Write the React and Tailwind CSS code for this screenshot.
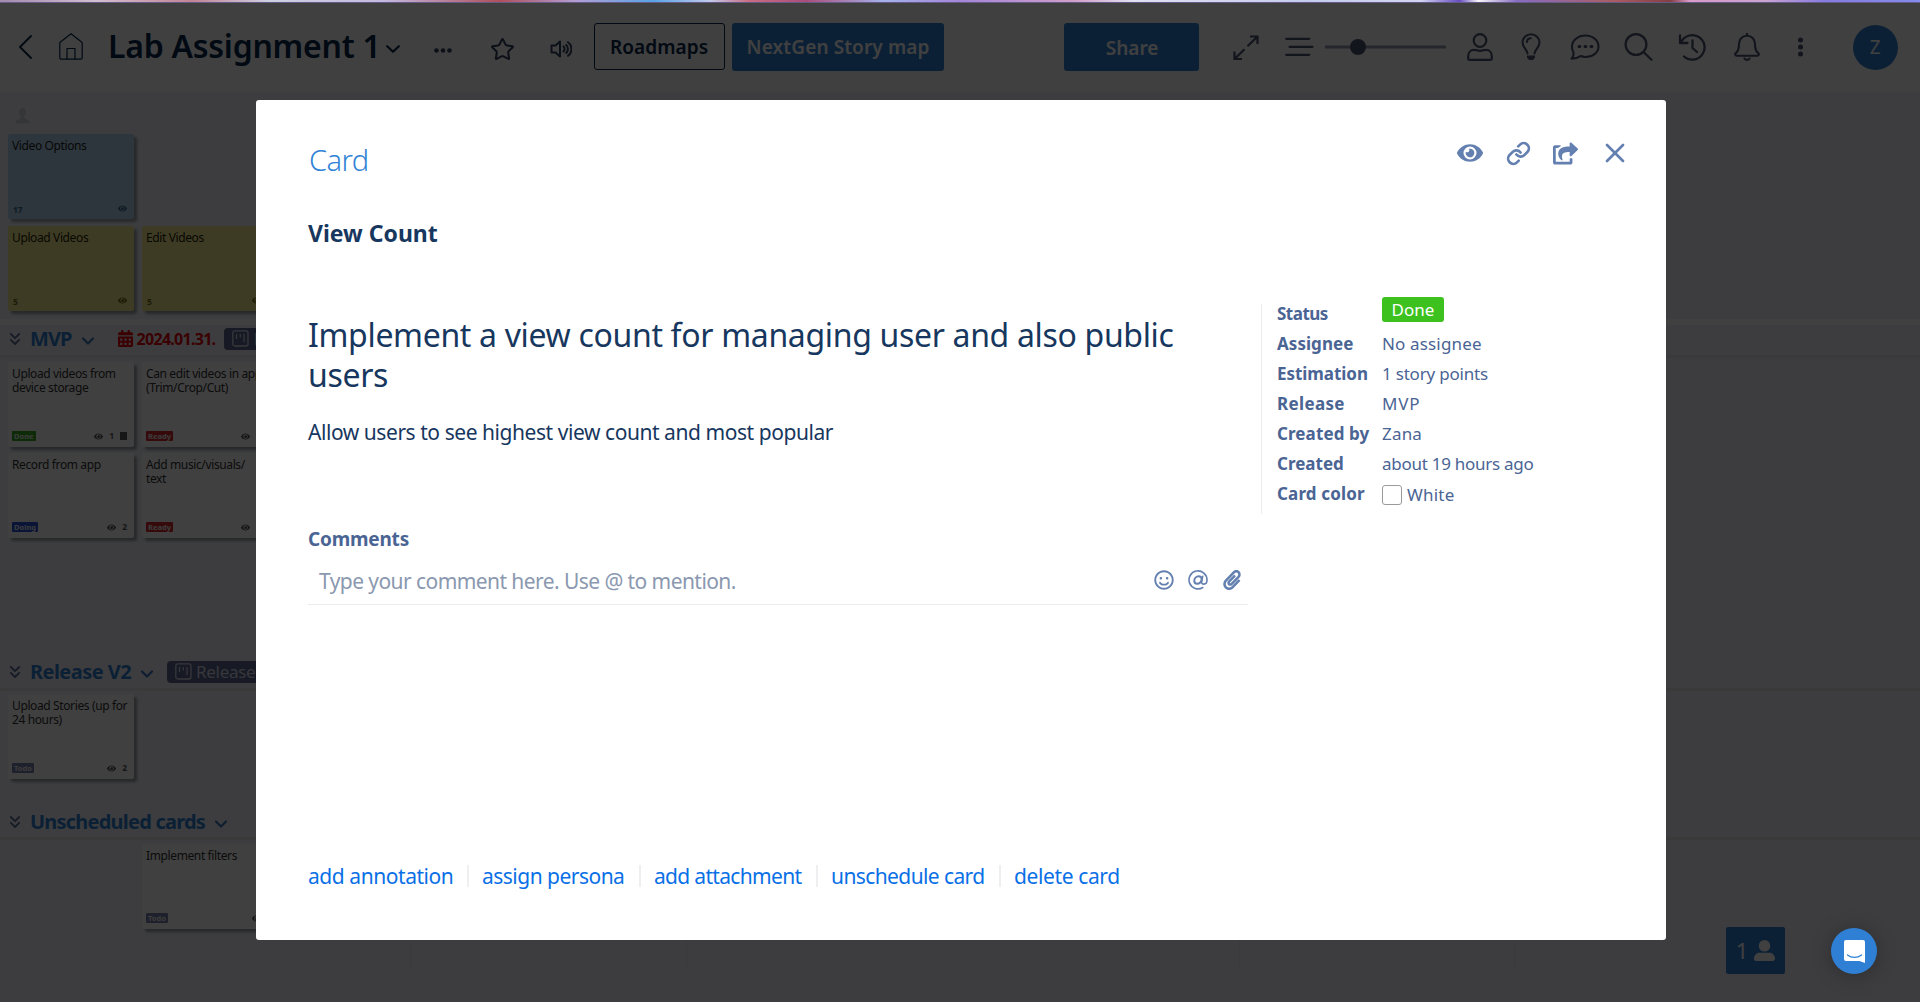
import React from "react";
import { FaEye, FaRegSmile, FaPaperclip, FaShareSquare, FaCalendarAlt } from "react-icons/fa";
import { Link, X, ChevronDown, ChevronsDown, Star } from "lucide-react";

const IconBox = ({ className, viewBox, children, sw = 2 }) => (
  <svg
    className={className}
    viewBox={viewBox}
    fill="none"
    stroke="currentColor"
    strokeWidth={sw}
    strokeLinecap="round"
    strokeLinejoin="round"
  >
    {children}
  </svg>
);

const badgeColors = {
  Done: "bg-[#35ab1c]",
  Doing: "bg-[#2450d8]",
  Ready: "bg-[#d8292f]",
  Todo: "bg-[#7a82ad]",
};

function Card({ title, tone = "bg-white text-[#333333]", meta = "text-[#5a5a5a]", badge, number, count, square }) {
  return (
    <div className={`flex h-[85px] w-[126px] shrink-0 flex-col justify-between rounded-[2px] pt-[5px] pr-[7px] pb-[6px] pl-1 shadow-[3px_3px_3px_rgba(0,0,0,0.35)] ${tone}`}>
      <div className="w-[124px] text-[12px] leading-[14px] tracking-[-0.38px] whitespace-pre">{title}</div>
      <div className={`flex h-[10px] items-center justify-between text-[8.500px] leading-[10px] font-bold ${meta}`}>
        {badge ? (
          <span className={`rounded-[1px] px-[2px] text-[7.500px] leading-[10px] font-bold text-[#f0f0f0] ${badgeColors[badge]}`}>{badge}</span>
        ) : (
          <span className="pt-1 pl-px">{number}</span>
        )}
        <span className="flex items-center gap-[6px]">
          <FaEye className="size-[9px]" />
          {count && <span>{count}</span>}
          {square && <span className="h-2 w-[7px] bg-current" />}
        </span>
      </div>
    </div>
  );
}

function LaneTag({ label }) {
  return (
    <span className="flex h-[22px] w-[120px] shrink-0 items-center gap-1 rounded-[4px] bg-[#5c658f] pl-2 text-[17px] leading-[22px] tracking-[-0.3px] text-[#d8dbe8]">
      <svg className="size-[17px] shrink-0" viewBox="0 0 17 17" fill="none" stroke="currentColor">
        <rect x="0.8" y="0.8" width="15.2" height="15.2" rx="2" strokeWidth="1.3" />
        <path d="M4.5 4v5M8.3 4v3.5M12 4v8" strokeWidth="1.2" />
      </svg>
      {label}
    </span>
  );
}

function LaneHeader({ title, tracking, date, tag, tagGap = "", pad = "pb-[3px]" }) {
  return (
    <div className={`flex h-[33px] items-center border-b-[3px] border-[#e5e6ec] pl-[5px] ${pad}`}>
      <ChevronsDown className="size-5 text-[#5c6c98]" strokeWidth={2.2} />
      <span className={`ml-[5px] text-[20px] leading-[26px] font-bold whitespace-nowrap text-[#2f80d4] ${tracking}`}>{title}</span>
      <ChevronDown className="mt-1 ml-[6px] size-5 text-[#3a74bc]" strokeWidth={2.6} />
      {date && (
        <span className="ml-5 flex items-center gap-1 text-[#e8000b]">
          <FaCalendarAlt className="h-[17px] w-[15px]" />
          <span className="text-[16px] leading-5 font-bold tracking-[-0.72px]">{date}</span>
        </span>
      )}
      {tag && (
        <span className={tagGap}>
          <LaneTag label={tag} />
        </span>
      )}
    </div>
  );
}

function TopBar() {
  return (
    <header className="flex h-[89px] shrink-0 items-start bg-white text-[#04264c] shadow-[0_2px_10px_rgba(0,0,0,0.15)]">
      <IconBox className="mt-8 ml-[19px] h-6 w-[13px]" viewBox="0 0 13 24" sw={1.8}>
        <path d="M12 1 1 12l11 11" />
      </IconBox>
      <IconBox className="mt-[30px] ml-[27px] h-[27px] w-6" viewBox="0 0 24 27" sw={1.2}>
        <path d="M.8 9.5 12 .8l11.200 8.700V25a1.200 1.200 0 0 1-1.200 1.200H2A1.200 1.200 0 0 1 .8 25ZM8 26V15.500h8V26" />
      </IconBox>
      <h1 className="mt-[22px] ml-[25px] text-[32px] leading-[42px] font-semibold tracking-[-0.25px] whitespace-nowrap">Lab Assignment 1</h1>
      <IconBox className="mt-[42px] ml-[5px] h-[8px] w-[14px]" viewBox="0 0 14 8" sw={2.2}>
        <path d="m1.200 1.200 5.800 5.600 5.800-5.600" />
      </IconBox>
      <svg className="mt-[45px] ml-[34px] h-[5px] w-[18px] text-[#33425f]" viewBox="0 0 18 5" fill="currentColor">
        <circle cx="2.500" cy="2.500" r="2.300" />
        <circle cx="9" cy="2.500" r="2.300" />
        <circle cx="15.500" cy="2.500" r="2.300" />
      </svg>
      <Star className="mt-[34px] ml-[38px] size-[25px] text-[#33425f]" strokeWidth={2} />
      <IconBox className="mt-[37px] ml-[35px] h-[18px] w-[22px] text-[#33425f]" viewBox="0 0 22 18" sw={2}>
        <path d="M1.500 5.500h4L10 1.500v15l-4.500-4h-4ZM13.500 6.500a3.500 3.500 0 0 1 0 5M16.200 5a5.500 5.500 0 0 1 0 8M18 2.200a8.500 8.500 0 0 1 0 13.600" />
      </IconBox>
      <button className="mt-5 ml-[22px] h-[47px] w-[131px] rounded-[3px] border border-[#04264c] pt-px text-[19px] font-semibold tracking-[0.1px]">Roadmaps</button>
      <button className="mt-5 ml-[7px] h-12 w-[212px] rounded-[3px] bg-[#2f80d4] pl-px text-[19px] font-semibold tracking-[0.13px] text-white">NextGen Story map</button>
      <button className="mt-5 ml-[120px] h-12 w-[135px] rounded-[3px] bg-[#2f80d4] pt-[2px] pl-[2px] text-[19px] font-semibold text-white">Share</button>
      <div className="flex grow items-center pt-[30px] text-[#48536e]">
        <IconBox className="ml-[34px] h-[25px] w-[26px]" viewBox="0 0 26 25" sw={2.2}>
          <path d="M17 1.500h7.500V9M24 2l-9.500 9.300M9 24H1.500v-7.500M2 23.500l9.500-9.300" strokeLinecap="butt" strokeLinejoin="miter" />
        </IconBox>
        <IconBox className="ml-[26px] h-5 w-[29px]" viewBox="0 0 29 20" sw={2.200}>
          <path d="M1.200 1.800h23M4.500 9.800h23M1.200 17.800h23" />
        </IconBox>
        <svg className="ml-[11px] h-[18px] w-[121px]" viewBox="0 0 121 18">
          <rect y="7.500" width="121" height="3" fill="#8a97ad" />
          <circle cx="33" cy="9" r="8" fill="currentColor" />
        </svg>
        <IconBox className="ml-[21px] h-7 w-[26px]" viewBox="0 0 26 28" sw={2.200}>
          <ellipse cx="13" cy="7.500" rx="6.300" ry="6.300" />
          <path d="M7 16.800c2.500 0 3 1 6 1s3.500-1 6-1c3.500 0 5.800 2.800 5.800 6.200v2.200c0 1-.7 1.600-1.600 1.600H2.800c-.9 0-1.600-.6-1.600-1.600V23c0-3.400 2.300-6.200 5.800-6.200Z" />
        </IconBox>
        <IconBox className="ml-[28px] h-7 w-[20px]" viewBox="0 0 20 28" sw={2.100}>
          <path d="M6.500 20.500C6 16 1.500 14.500 1.500 9.300a8.500 8 0 0 1 17 0c0 5.200-4.500 6.700-5 11.200M6 9c0-2.200 1.500-3.700 3.800-3.700" />
          <path d="M6 22.500h8v2l-2 2.500H8l-2-2.500Z" fill="currentColor" stroke="none" />
        </IconBox>
        <IconBox className="ml-[29px] h-[26px] w-[30px]" viewBox="0 0 30 26" sw={2.100}>
          <path d="M3.500 18.500A10.500 10.500 0 0 1 2 12.500C2 6.500 8 1.500 15.500 1.500S28.500 6.500 28.500 12.500 23 23 15.500 23a14 14 0 0 1-5-.9C8 23.800 5 24.600 1.500 24.600 3 23 3.800 21 3.500 18.500Z" />
          <path d="M9 12.500h.9M15 12.500h.9M21 12.500h.9" strokeWidth="3" />
        </IconBox>
        <IconBox className="ml-[24px] h-7 w-[29px]" viewBox="0 0 29 28" sw={2.200}>
          <circle cx="12" cy="11.500" r="10.400" />
          <path d="m19.500 19 8 7.700" />
        </IconBox>
        <IconBox className="ml-[25px] h-7 w-[29px]" viewBox="0 0 29 28" sw={2.300}>
          <path d="M2 2.500v7.500h7.500M3 9.500A12.300 12.300 0 1 1 6 23.500M14.500 7.500v7.500l4.500 4" />
        </IconBox>
        <IconBox className="ml-[27px] h-7 w-[26px]" viewBox="0 0 26 28" sw={2.100}>
          <path d="M13 .8v2M13 2.800c-5 0-8 3.600-8 8.200 0 6-1.500 7.500-3.500 9.500-.8.900-.2 2.200 1 2.200h21c1.200 0 1.800-1.300 1-2.200-2-2-3.500-3.500-3.500-9.500 0-4.600-3-8.200-8-8.200ZM10.500 25.500c.5 1.800 4.500 1.800 5 0" />
        </IconBox>
        <svg className="ml-[37px] h-[22px] w-[7px]" viewBox="0 0 7 22" fill="currentColor">
          <circle cx="3.500" cy="4" r="2.500" />
          <circle cx="3.500" cy="11" r="2.500" />
          <circle cx="3.500" cy="18" r="2.500" />
        </svg>
        <span className="-mt-4 -mb-4 ml-[49px] flex size-[45px] shrink-0 items-center justify-center rounded-full bg-[#2f80d4] text-[19px] text-white">Z</span>
      </div>
    </header>
  );
}

function Board() {
  return (
    <main className="flex grow flex-col bg-[#f1f4fa]">
      <section className="h-[227px] pl-2">
        <svg className="mt-4 ml-[7px] h-4 w-[15px] text-[#d4d6da]" viewBox="0 0 15 16" fill="currentColor">
          <path d="M7.500 0C5.300 0 4 1.700 4 4s1 3.600 2 4.500v1.300C4.500 11 .8 11.300.5 15.500h14C14.200 11.300 10.500 11 9 9.800V8.500c1-.9 2-2.200 2-4.500S9.700 0 7.500 0Z" />
        </svg>
        <div className="mt-[10px]">
          <Card title="Video Options" tone="-mb-px bg-[#b4d8f0] text-[#222222]" meta="text-[#336a8a]" number="17" />
        </div>
        <div className="mt-2 flex gap-2">
          <Card title="Upload Videos" tone="bg-[#f5ec93] text-[#222200]" meta="text-[#6f6a10]" number="5" />
          <Card title="Edit Videos" tone="bg-[#f5ec93] text-[#222200]" meta="text-[#6f6a10]" number="5" />
        </div>
      </section>
      <section className="h-[339px] border-t-[6px] border-white">
        <LaneHeader title="MVP" tracking="tracking-[-0.9px]" date="2024.01.31." tag="R" tagGap="ml-[9px]" />
        <div className="mt-1 grid grid-cols-[126px_126px] gap-x-2 gap-y-[6px] pl-2">
          <Card title={"Upload videos from\ndevice storage"} badge="Done" count="1" square />
          <Card title={"Can edit videos in app\n(Trim/Crop/Cut)"} badge="Ready" count="1" />
          <Card title="Record from app" badge="Doing" count="2" />
          <Card title={"Add music/visuals/\ntext"} badge="Ready" count="1" />
        </div>
      </section>
      <section className="h-[149px]">
        <LaneHeader title="Release V2" tracking="tracking-[-0.55px]" tag="Release" tagGap="ml-[10px]" />
        <div className="mt-[3px] pl-2">
          <Card title={"Upload Stories (up for\n24 hours)"} badge="Todo" count="2" />
        </div>
      </section>
      <section>
        <LaneHeader title="Unscheduled cards" tracking="tracking-[-0.78px]" pad="pb-0" />
        <div className="mt-1 pl-[142px]">
          <Card title="Implement filters" badge="Todo" />
        </div>
        <div className="mt-[11px] flex h-[30px] pl-[410px]">
          <span className="w-[276px] border-l border-[#e4e6ea]" />
          <span className="w-[553px] border-l border-[#e4e6ea]" />
          <span className="w-[275px] border-l border-[#e4e6ea]" />
          <span className="border-l border-[#e4e6ea]" />
        </div>
      </section>
    </main>
  );
}

const details = [
  ["Status", "tracking-[-0.5px]", null],
  ["Assignee", "tracking-[0.05px]", "No assignee", "tracking-[0.15px]"],
  ["Estimation", "tracking-[-0.05px]", "1 story points", "tracking-[-0.2px]"],
  ["Release", "tracking-[0.35px]", "MVP", "tracking-[0.8px]"],
  ["Created by", "tracking-[0.1px]", "Zana", "tracking-[0.2px]"],
  ["Created", "tracking-[0px]", "about 19 hours ago", "tracking-[-0.27px]"],
  ["Card color", "tracking-[0.15px]", null],
];

const actions = [
  ["add annotation", "w-[159px] tracking-[-0.44px]"],
  ["assign persona", "w-[157px] tracking-[-0.52px]"],
  ["add attachment", "w-[162px] tracking-[-0.68px]"],
  ["unschedule card", "w-[168px] tracking-[-0.6px]"],
  ["delete card", "w-[120px] tracking-[-0.38px]"],
];

function CardDialog() {
  return (
    <div className="flex h-[840px] w-[1410px] flex-col rounded-[3px] bg-white pl-[52px] text-[#17375e]">
      <div className="flex justify-between pt-10 pr-[35px]">
        <span className="pl-px text-[29px] leading-10 font-light tracking-[-0.6px] text-[#3083d6]">Card</span>
        <div className="-mt-px flex h-7 items-center text-[#6480b0]">
          <FaEye className="size-[26px]" />
          <Link className="ml-[23px] size-[25px]" strokeWidth={2.600} />
          <FaShareSquare className="ml-[22px] size-[25px]" />
          <X className="ml-[21px] size-8" strokeWidth={2} />
        </div>
      </div>
      <h2 className="mt-[37px] text-[23px] leading-8 font-bold tracking-[0px]">View Count</h2>
      <div className="mt-[55px] flex">
        <div className="w-[940px] shrink-0 pt-[11px]">
          <p className="text-[32px] leading-10 tracking-[-0.33px]">
            Implement a view count for managing user and also public
            <br />
            users
          </p>
          <p className="mt-[23px] text-[21px] leading-7 tracking-[-0.445px]">Allow users to see highest view count and most popular</p>
          <h3 className="mt-[81px] text-[19px] leading-6 font-bold tracking-[-0.2px] text-[#4a6494]">Comments</h3>
          <div className="mt-[7px] flex h-[47px] items-center border-b border-[#ececee] pt-[2px] pl-[11px]">
            <span className="grow text-[21px] tracking-[-0.57px] text-[#8a98b0]">Type your comment here. Use @ to mention.</span>
            <span className="-mt-1 flex items-center gap-[14px] pr-[6px] text-[#6480b0]">
              <FaRegSmile className="size-5" />
              <IconBox className="size-5" viewBox="0 0 20 20" sw={1.600}>
                <path d="M14.800 17.500A9 9 0 1 1 19 10c0 2.600-1.400 4.100-3.200 4.100-1.600 0-2.400-.9-2.100-2.600l1-5.300" />
                <path d="M13.700 9.200c-.1-1.700-1.200-2.900-3-2.900-2.500 0-4.400 2-4.400 4.500 0 1.900 1.100 3 2.700 3 2.600 0 4.400-1.900 4.700-4.600Z" strokeWidth="2" />
              </IconBox>
              <FaPaperclip className="size-5" />
            </span>
          </div>
        </div>
        <div className="ml-[13px] h-[210px] border-l border-[#ececee] pl-[15px]">
          <dl className="-mt-[5px] grid auto-rows-[30px] grid-cols-[105px_auto] text-[17px] leading-[30px] whitespace-nowrap text-[#4a6494]">
            {details.map(([label, lt, value, vt]) => (
              <React.Fragment key={label}>
                <dt className={`font-bold ${lt}`}>{label}</dt>
                {label === "Status" && (
                  <dd className="-mt-[2px] h-[25px] w-[62px] rounded-[3px] bg-[#3cc11f] text-center leading-[25px] text-white">Done</dd>
                )}
                {label === "Card color" && (
                  <dd className="flex items-center gap-[5px] pt-[2px] tracking-[0.2px]">
                    <span className="size-5 rounded-[3px] border border-[#9a9a9a]" />
                    White
                  </dd>
                )}
                {value && <dd className={vt}>{value}</dd>}
              </React.Fragment>
            ))}
          </dl>
        </div>
      </div>
      <nav className="mt-auto mb-[52px] flex items-center text-[21px] leading-6 text-[#0a70e6]">
        {actions.map(([label, cls], i) => (
          <React.Fragment key={label}>
            {i > 0 && <span className="mr-[13px] h-[22px] w-[2px] bg-[#efeff1]" />}
            <a className={`whitespace-nowrap ${cls}`}>{label}</a>
          </React.Fragment>
        ))}
      </nav>
    </div>
  );
}

export default function App() {
  return (
    <div className="relative flex h-[1002px] w-full flex-col overflow-hidden font-['Noto_Sans',sans-serif]">
      <div className="h-[3px] shrink-0 border-b border-[#6a5f88] bg-[linear-gradient(90deg,#a78fb5_0%,#d9c5d8_5%,#c9889c_10%,#d5d8ea_14%,#c9c0e8_20%,#b4525f_26%,#b9a4dc_30%,#5aa8ee_34%,#c8d0f2_37%,#d07088_39%,#b05080_42%,#a9b8f4_46%,#a98ae0_50%,#d8a4d0_56%,#e8e8fa_59%,#ccd2f6_68%,#d8dcfa_74%,#6b50c8_76%,#ffffff_77%,#8a70c8_79%,#b06068_84%,#8a4048_87%,#e0a0d0_88%,#d0a8d8_92%,#8a80e8_95%,#8890f4_100%)]" />
      <TopBar />
      <Board />
      <div className="absolute right-[135px] bottom-7 flex h-[47px] w-[59px] items-center justify-center gap-[6px] rounded-[2px] bg-[#2f80d4] text-[22px] text-white">
        1
        <svg className="h-[21px] w-[21px]" viewBox="0 0 21 21" fill="currentColor">
          <circle cx="10.500" cy="5.800" r="5.800" />
          <path d="M5.500 12.800h10c3 0 5.500 2.700 5.500 6 0 1.200-.9 2.200-2 2.200H2c-1.100 0-2-1-2-2.200 0-3.300 2.500-6 5.500-6Z" />
        </svg>
      </div>
      <div className="absolute inset-x-0 top-[3px] bottom-0 flex items-start justify-center bg-black/75 pt-[97px] pl-[2px]">
        <CardDialog />
      </div>
      <div className="absolute right-[43px] bottom-[28px] flex size-[46px] items-center justify-center rounded-full bg-[#2f80d4] shadow-[0_2px_20px_rgba(0,0,0,0.25)]">
        <svg className="h-[23px] w-[21px]" viewBox="0 0 21 23">
          <path d="M2 0h17a2 2 0 0 1 2 2v21l-5.500-2H2a2 2 0 0 1-2-2V2a2 2 0 0 1 2-2Z" fill="#ffffff" />
          <path d="M3.500 15c4 3.200 10 3.200 14 0" fill="none" stroke="#2f80d4" strokeWidth="1.300" strokeLinecap="round" />
        </svg>
      </div>
    </div>
  );
}
